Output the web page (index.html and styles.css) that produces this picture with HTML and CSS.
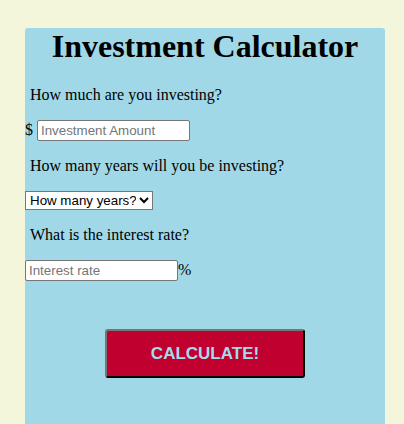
FILE: index.html
```
<!DOCTYPE html>
<html>
<head>
<meta charset="utf-8">
<link rel="stylesheet" href="styles.css">
</head>
<body>
<div class="calc">
  <h1 class="title">Investment Calculator</h1>
  <p class="label">How much are you investing?</p>
  <p class="row">$ <input class="field amount" type="text" placeholder="Investment Amount"></p>
  <p class="label">How many years will you be investing?</p>
  <p class="row"><select class="years"><option>How many years?</option></select></p>
  <p class="label">What is the interest rate?</p>
  <p class="row"><input class="field rate" type="text" placeholder="Interest rate">%</p>
  <div class="actions"><button class="calc-btn">CALCULATE!</button></div>
</div>
</body>
</html>
```
FILE: styles.css
```
html, body {
  margin: 0;
  padding: 0;
}
body {
  background: #f4f6dc;
  font-family: "Liberation Serif", "Times New Roman", serif;
  font-size: 16px;
  color: #000;
}
.calc {
  margin: 28px 0 0 25px;
  width: 360px;
  min-height: 396px;
  background: #a0d8e8;
  border-radius: 3px 3px 0 0;
}
.title {
  margin: 0 0 21px;
  font-size: 32px;
  font-weight: bold;
  text-align: center;
}
.label {
  margin: 16px 0;
  padding-left: 5px;
}
.row {
  margin: 16px 0;
}
.field {
  box-sizing: border-box;
  height: 21px;
  width: 153px;
  border: 1px solid #767676;
  border-radius: 2px;
  padding: 1px 3px;
  font-family: "Liberation Sans", Arial, sans-serif;
  font-size: 13.33px;
  background: #fff;
  vertical-align: baseline;
}
.field::placeholder {
  color: #757575;
}
.years {
  font-family: "Liberation Sans", Arial, sans-serif;
  font-size: 13.33px;
  height: 19px;
  width: 128px;
  border: 1px solid #767676;
  border-radius: 0;
  background: #fff;
  color: #000;
}
.actions {
  display: flex;
  justify-content: center;
  padding-top: 32px;
  padding-bottom: 40px;
}
.calc-btn {
  width: 200px;
  height: 49px;
  background: #c0002f;
  color: #a3dcec;
  font-family: "Liberation Sans", Arial, sans-serif;
  font-weight: bold;
  font-size: 17px;
  border: 2px outset #767676;
  border-color: #767676 #222 #222 #767676;
  border-radius: 3px;
}
```
